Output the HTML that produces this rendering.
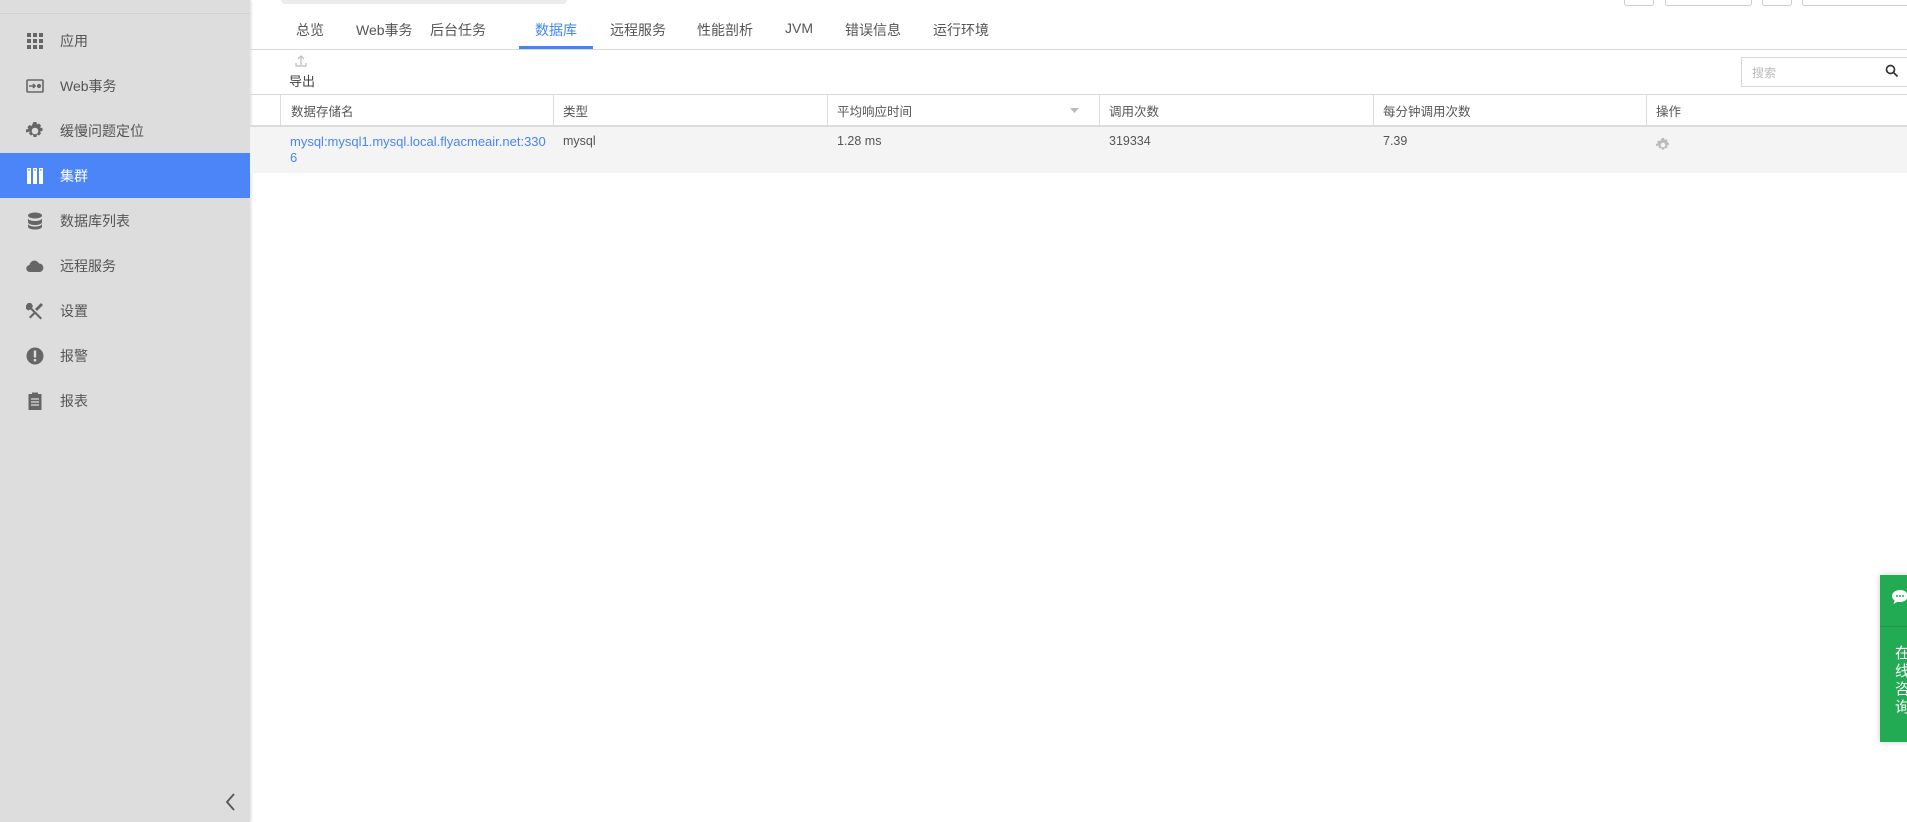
<!DOCTYPE html>
<html><head><meta charset="utf-8"><style>
*{margin:0;padding:0;box-sizing:border-box}
body{width:1907px;height:822px;overflow:hidden;background:#fff;font-family:"Liberation Sans","Noto Sans CJK SC",sans-serif;position:relative;color:#555}
.side{position:absolute;left:0;top:0;width:250px;height:822px;background:#dddddd;box-shadow:1px 0 3px rgba(0,0,0,.15)}
.side .topline{position:absolute;left:0;right:0;top:13px;height:1px;background:#d0d0d0}
.item{position:absolute;left:0;width:250px;height:45px;display:flex;align-items:center;font-size:14px;color:#555}
.item svg{position:absolute;left:26px;width:18px;height:18px}
.item span{position:absolute;left:60px}
.item.act{background:#4c85f8;color:#fff}
.abs{position:absolute}
.tab{position:absolute;top:20px;font-size:14px;color:#555}
.th,.td{position:absolute;font-size:12.5px;color:#555}
.vl{position:absolute;top:94px;height:31px;width:1px;background:#dcdcdc}
</style></head><body>
<div class="side">
<div class="topline"></div>
<div class="item" style="top:18px"><svg viewBox="0 0 18 18" fill="#666"><rect x="1" y="1" width="4" height="4"/><rect x="7" y="1" width="4" height="4"/><rect x="13" y="1" width="4" height="4"/><rect x="1" y="7" width="4" height="4"/><rect x="7" y="7" width="4" height="4"/><rect x="13" y="7" width="4" height="4"/><rect x="1" y="13" width="4" height="4"/><rect x="7" y="13" width="4" height="4"/><rect x="13" y="13" width="4" height="4"/></svg><span>应用</span></div>
<div class="item" style="top:63px"><svg viewBox="0 0 18 18" fill="none" stroke="#666" stroke-width="1.6"><rect x="1" y="3" width="16" height="12" rx="1"/><path d="M3 9h6M7 7l2 2-2 2"/><circle cx="13" cy="9" r="1.3" fill="#666"/></svg><span>Web事务</span></div>
<div class="item" style="top:108px"><svg viewBox="0 0 18 18" fill="#666"><path d="M7.5 0h3l.5 2.5 2-1 2 2-1 2 2.5.5v3l-2.5.5 1 2-2 2-2-1-.5 2.5h-3l-.5-2.5-2 1-2-2 1-2L0 10.5v-3l2.5-.5-1-2 2-2 2 1z"/><circle cx="9" cy="9" r="3.3" fill="#ddd"/></svg><span>缓慢问题定位</span></div>
<div class="item act" style="top:153px"><svg viewBox="0 0 18 18" fill="#fff"><rect x="1" y="1" width="4" height="16"/><rect x="7" y="1" width="4" height="16"/><rect x="13" y="1" width="4" height="16"/><path d="M2 3h2M8 3h2M14 3h2" stroke="#4c85f8"/></svg><span>集群</span></div>
<div class="item" style="top:198px"><svg viewBox="0 0 18 18" fill="#666"><ellipse cx="9" cy="3.5" rx="7" ry="3"/><path d="M2 6c0 4 14 4 14 0v4c0 4-14 4-14 0z"/><path d="M2 11.5c0 4 14 4 14 0v3c0 4-14 4-14 0z"/></svg><span>数据库列表</span></div>
<div class="item" style="top:243px"><svg viewBox="0 0 18 18" fill="#666"><path d="M4 15a3.5 3.5 0 0 1-.5-7A5 5 0 0 1 13 6.5a4.3 4.3 0 0 1 1 8.5z"/></svg><span>远程服务</span></div>
<div class="item" style="top:288px"><svg viewBox="0 0 18 18" fill="#666"><path d="M2 1l3 0 2 3-1 2 10 10-1.5 1.5-10-10-2 1-3-2V4z"/><path d="M15 1l2 2-6 6-2-2z"/><path d="M8 10l-5 5 1.5 1.5 5-5z"/></svg><span>设置</span></div>
<div class="item" style="top:333px"><svg viewBox="0 0 18 18"><circle cx="9" cy="9" r="8.5" fill="#666"/><rect x="7.8" y="3.5" width="2.4" height="7" fill="#ddd"/><rect x="7.8" y="12" width="2.4" height="2.4" fill="#ddd"/></svg><span>报警</span></div>
<div class="item" style="top:378px"><svg viewBox="0 0 18 18" fill="#666"><rect x="2.5" y="2" width="13" height="16"/><rect x="6" y="0.5" width="6" height="3"/><path d="M5 7h8M5 10h8M5 13h8" stroke="#ddd" stroke-width="1.3"/></svg><span>报表</span></div>
<svg class="abs" style="left:224px;top:793px" width="12" height="18" viewBox="0 0 12 18"><path d="M10 1L3 9l7 8" fill="none" stroke="#555" stroke-width="1.8"/></svg>
</div>

<div class="abs" style="left:281px;top:0;width:286px;height:4px;background:#ececec;border-radius:0 0 4px 4px"></div>
<div class="abs" style="left:1624px;top:0;width:30px;height:6px;border:1px solid #ccc;border-top:0;border-radius:0 0 3px 3px"></div>
<div class="abs" style="left:1665px;top:0;width:87px;height:6px;border:1px solid #ccc;border-top:0;border-radius:0 0 3px 3px"></div>
<div class="abs" style="left:1762px;top:0;width:30px;height:6px;border:1px solid #ccc;border-top:0;border-radius:0 0 3px 3px"></div>
<div class="abs" style="left:1802px;top:0;width:110px;height:6px;border:1px solid #ccc;border-top:0;border-radius:0 0 3px 3px"></div>

<div class="tab" style="left:296px">总览</div>
<div class="tab" style="left:356px">Web事务</div>
<div class="tab" style="left:430px">后台任务</div>
<div class="tab" style="left:535px;color:#3f86f6">数据库</div>
<div class="tab" style="left:610px">远程服务</div>
<div class="tab" style="left:697px">性能剖析</div>
<div class="tab" style="left:785px">JVM</div>
<div class="tab" style="left:845px">错误信息</div>
<div class="tab" style="left:933px">运行环境</div>
<div class="abs" style="left:519px;top:46px;width:74px;height:3px;background:#3f86f6"></div>
<div class="abs" style="left:250px;top:49px;width:1657px;height:1px;background:#d8d8d8"></div>

<svg class="abs" style="left:294px;top:54px" width="14" height="14" viewBox="0 0 14 14" fill="none" stroke="#bbb" stroke-width="1.2"><path d="M7 11V2M4 5l3-3 3 3M2 9v3h10V9"/></svg>
<div class="abs" style="left:289px;top:71px;font-size:13px;color:#444">导出</div>

<div class="abs" style="left:1741px;top:57px;width:170px;height:30px;border:1px solid #d6d6d6"></div>
<div class="abs" style="left:1752px;top:64px;font-size:12px;color:#bbb">搜索</div>
<svg class="abs" style="left:1885px;top:64px" width="14" height="14" viewBox="0 0 14 14" fill="none" stroke="#333" stroke-width="1.7"><circle cx="5.5" cy="5.5" r="4"/><path d="M8.5 8.5l4 4"/></svg>

<div class="abs" style="left:250px;top:94px;width:1657px;height:1px;background:#d8d8d8"></div>
<div class="abs" style="left:250px;top:125px;width:1657px;height:2px;background:#dcdcdc"></div>
<div class="abs" style="left:250px;top:127px;width:1657px;height:46px;background:#f4f4f4"></div>
<div class="vl" style="left:280px"></div><div class="vl" style="left:553px"></div><div class="vl" style="left:827px"></div><div class="vl" style="left:1099px"></div><div class="vl" style="left:1373px"></div><div class="vl" style="left:1646px"></div>
<div class="th" style="left:291px;top:101px">数据存储名</div>
<div class="th" style="left:563px;top:101px">类型</div>
<div class="th" style="left:837px;top:101px">平均响应时间</div>
<svg class="abs" style="left:1070px;top:108px" width="9" height="6"><path d="M0 0h9L4.5 5z" fill="#bbb"/></svg>
<div class="th" style="left:1109px;top:101px">调用次数</div>
<div class="th" style="left:1383px;top:101px">每分钟调用次数</div>
<div class="th" style="left:1656px;top:101px">操作</div>

<div class="td" style="left:290px;top:134px;color:#4a86f0;line-height:16px;width:256px;word-break:break-all;font-size:13px">mysql:mysql1.mysql.local.flyacmeair.net:3306</div>
<div class="td" style="left:563px;top:134px">mysql</div>
<div class="td" style="left:837px;top:134px">1.28 ms</div>
<div class="td" style="left:1109px;top:134px">319334</div>
<div class="td" style="left:1383px;top:134px">7.39</div>
<svg class="abs" style="left:1656px;top:138px" width="14" height="14" viewBox="0 0 18 18" fill="#bbb"><path d="M7.5 0h3l.5 2.5 2-1 2 2-1 2 2.5.5v3l-2.5.5 1 2-2 2-2-1-.5 2.5h-3l-.5-2.5-2 1-2-2 1-2L0 10.5v-3l2.5-.5-1-2 2-2 2 1z"/><circle cx="9" cy="9" r="3" fill="#f4f4f4"/></svg>

<div class="abs" style="left:1880px;top:575px;width:40px;height:167px;background:#22ab52;box-shadow:0 0 6px rgba(0,0,0,.2)">
<svg class="abs" style="left:11px;top:14px" width="18" height="16" viewBox="0 0 18 16"><path d="M9 1C4.5 1 1 3.700 1 7c0 1.8 1 3.4 2.6 4.5L2.5 15l4-2.3c.8.2 1.6.3 2.5.3 4.5 0 8-2.7 8-6s-3.5-6-8-6z" fill="#fff"/><circle cx="6" cy="7" r="1" fill="#22ab52"/><circle cx="9" cy="7" r="1" fill="#22ab52"/><circle cx="12" cy="7" r="1" fill="#22ab52"/></svg>
<div class="abs" style="left:0;top:51px;width:40px;height:1px;background:#1e9a48"></div>
<div class="abs" style="left:15px;top:70px;font-size:15px;line-height:18px;color:#fff;width:16px">在线咨询</div>
</div>
</body></html>
